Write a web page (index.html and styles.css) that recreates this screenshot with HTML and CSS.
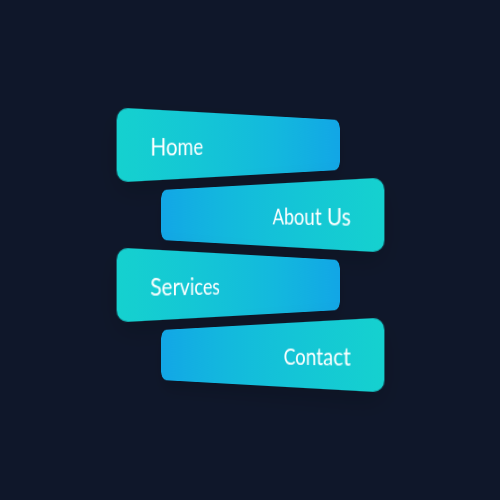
FILE: index.html
```html
<!DOCTYPE html>
<html lang="en">
<head>
<meta charset="utf-8">
<title>Menu</title>
<link rel="stylesheet" href="styles.css">
</head>
<body>
<nav class="menu">
  <a class="item item-left" href="#">Home</a>
  <a class="item item-right" href="#">About Us</a>
  <a class="item item-left" href="#">Services</a>
  <a class="item item-right" href="#">Contact</a>
</nav>
</body>
</html>
```
FILE: styles.css
```css
html, body {
  margin: 0;
  padding: 0;
}
body {
  width: 500px;
  height: 500px;
  background: #0f172a;
  display: flex;
  align-items: center;
  justify-content: center;
  font-family: "Lato", "Open Sans", sans-serif;
}
.menu {
  display: flex;
  flex-direction: column;
  align-items: center;
  gap: 10px;
}
.item {
  box-sizing: border-box;
  width: 293px;
  height: 60px;
  border-radius: 10px;
  display: flex;
  align-items: center;
  padding: 0 31px;
  color: #ffffff;
  text-decoration: none;
  font-size: 21px;
  font-weight: 400;
  box-shadow: 0 8px 24px rgba(0, 0, 0, 0.18);
}
.item-left {
  justify-content: flex-start;
  background: linear-gradient(90deg, #15d1cf 0%, #13b9dd 60%, #12a6e6 100%);
  transform: perspective(500px) rotateY(43deg);
}
.item-right {
  justify-content: flex-end;
  background: linear-gradient(90deg, #12a6e6 0%, #13b9dd 40%, #15d1cf 100%);
  transform: perspective(500px) rotateY(-43deg);
}
```
